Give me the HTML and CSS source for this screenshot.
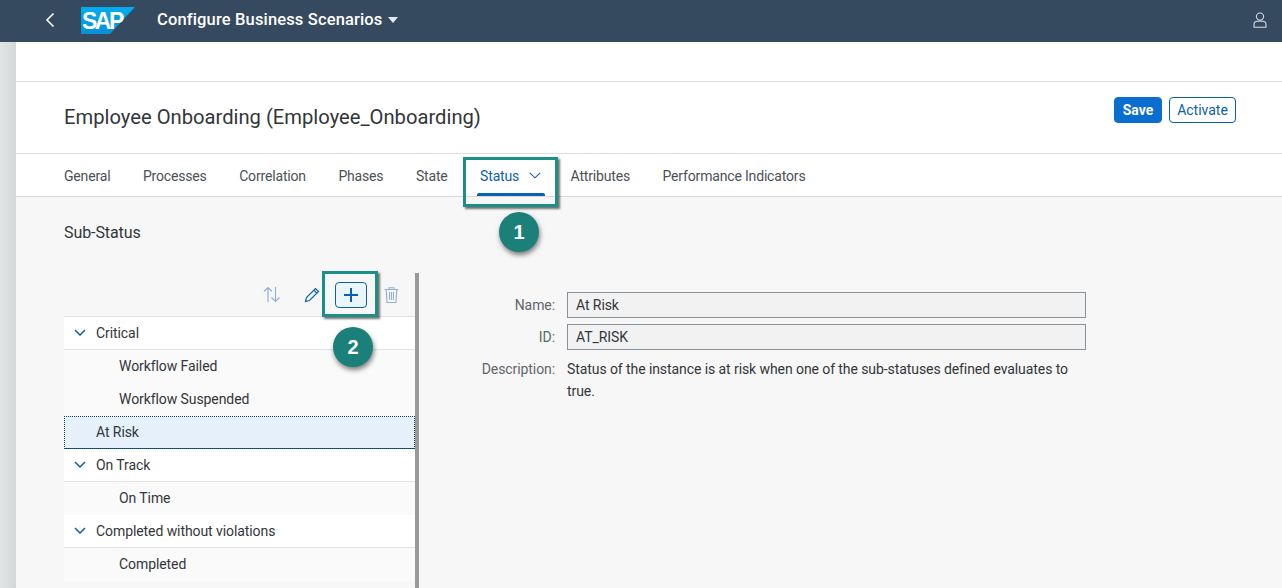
FILE: index.html
```html
<!DOCTYPE html>
<html>
<head>
    <title>Configure Business Scenarios</title>
    <link rel="stylesheet" href="styles.css">
</head>
<body>
    <header class="shell">
        <svg class="back" width="12" height="16" viewBox="0 0 12 16"><path d="M9.500 1.500 3 8l6.500 6.500" fill="none" stroke="#fff" stroke-width="1.600"/></svg>
        <div class="logo">
            <svg width="54" height="27" viewBox="0 0 54 27"><defs><linearGradient id="sapg" x1="0" y1="0" x2="0" y2="1"><stop offset="0" stop-color="#00aeef"/><stop offset="1" stop-color="#0a8fd6"/></linearGradient></defs><polygon points="0,0 54,0 29,27 0,27" fill="url(#sapg)"/></svg>
            <span class="logo-text">SAP</span>
        </div>
        <span class="app-title">Configure Business Scenarios</span>
        <span class="caret"></span>
        <svg class="user" width="14" height="16" viewBox="0 0 14 16"><circle cx="7" cy="4.600" r="3.600" fill="none" stroke="#d5dde6" stroke-width="1.100"/><path d="M1 15.200V12.600C1 10.500 2.600 9.200 4.400 9.200h5.200c1.800 0 3.400 1.300 3.400 3.400v2.600z" fill="none" stroke="#d5dde6" stroke-width="1.100"/></svg>
    </header>

    <div class="page">
        <div class="strip"></div>
        <main class="content">
            <div class="topbar"></div>
            <div class="title-row">
                <h1>Employee Onboarding (Employee_Onboarding)</h1>
                <div class="actions">
                    <button class="btn btn-save">Save</button>
                    <button class="btn btn-activate">Activate</button>
                </div>
            </div>
            <nav class="tabs">
                <a class="tab">General</a>
                <a class="tab">Processes</a>
                <a class="tab">Correlation</a>
                <a class="tab">Phases</a>
                <a class="tab">State</a>
                <a class="tab tab-active">Status
                    <svg class="tab-arrow" width="12" height="7" viewBox="0 0 12 7"><path d="M.8.800 6 5.800 11.200.800" fill="none" stroke="#0a5fb0" stroke-width="1.100"/></svg>
                    <span class="callout-box callout-tab"></span>
                    <span class="badge badge-tab">1</span>
                </a>
                <a class="tab">Attributes</a>
                <a class="tab">Performance Indicators</a>
            </nav>
            <section class="body">
                <h2>Sub-Status</h2>
                <div class="split">
                    <div class="tree">
                        <div class="toolbar">
                            <svg class="tool-sort" width="18" height="17" viewBox="0 0 18 17"><path d="M5 16V1.500M1 5.500l4-4 4 4M12.500 1v14.500M8.500 11.500l4 4 4-4" fill="none" stroke="#8fb2d8" stroke-width="1.200"/></svg>
                            <svg class="tool-edit" width="16" height="16" viewBox="0 0 16 16"><path d="M1.500 14.500 2.500 10.500 11.500 1.500 14.500 4.500 5.500 13.500zM9.800 3.200l3 3" fill="none" stroke="#0a5fb0" stroke-width="1.200"/></svg>
                            <span class="tool-add">
                                <svg width="16" height="16" viewBox="0 0 16 16"><path d="M8 1v14M1 8h14" stroke="#0a5fb0" stroke-width="2"/></svg>
                                <span class="callout-box callout-add"></span>
                                <span class="badge badge-add">2</span>
                            </span>
                            <svg class="tool-trash" width="15" height="16" viewBox="0 0 15 16"><path d="M.5 2.500h14M5 2.500V.7h5v1.800M2.200 2.500l.8 13h9l.8-13M5.500 5v8M7.500 5v8M9.500 5v8" fill="none" stroke="#8fb2d8" stroke-width="1.100"/></svg>
                        </div>
                        <div class="row row-parent"><svg class="chev" width="12" height="7" viewBox="0 0 12 7"><path d="M1 1l5 5 5-5" fill="none" stroke="#0a5fb0" stroke-width="1.500"/></svg>Critical</div>
                        <div class="row row-child">Workflow Failed</div>
                        <div class="row row-child">Workflow Suspended</div>
                        <div class="row row-selected">At Risk</div>
                        <div class="row row-parent"><svg class="chev" width="12" height="7" viewBox="0 0 12 7"><path d="M1 1l5 5 5-5" fill="none" stroke="#0a5fb0" stroke-width="1.500"/></svg>On Track</div>
                        <div class="row row-child">On Time</div>
                        <div class="row row-parent"><svg class="chev" width="12" height="7" viewBox="0 0 12 7"><path d="M1 1l5 5 5-5" fill="none" stroke="#0a5fb0" stroke-width="1.500"/></svg>Completed without violations</div>
                        <div class="row row-child">Completed</div>
                    </div>
                    <div class="splitter"></div>
                    <div class="details">
                        <label class="lbl">Name:</label>
                        <div class="field">At Risk</div>
                        <label class="lbl">ID:</label>
                        <div class="field">AT_RISK</div>
                        <label class="lbl lbl-desc">Description:</label>
                        <p class="desc">Status of the instance is at risk when one of the sub-statuses defined evaluates to true.</p>
                    </div>
                </div>
            </section>
        </main>
    </div>
</body>
</html>
```

FILE: styles.css
```css
html, body {
    margin: 0;
    height: 588px;
    overflow: hidden;
}
body {
    font-family: Roboto, Arial, sans-serif;
    font-size: 14px;
    letter-spacing: -0.08px;
    color: #32363a;
    background: #fff;
}
.shell {
    height: 42px;
    background: #354a5f;
    display: flex;
    align-items: center;
    box-sizing: border-box;
    padding: 0 0 3px 44px;
}
.back {
    margin-right: 25px;
}
.logo {
    position: relative;
    width: 54px;
    height: 27px;
    margin-right: 22px;
    align-self: flex-start;
    margin-top: 7px;
}
.logo svg {
    display: block;
}
.logo-text {
    position: absolute;
    left: 1px;
    top: 2px;
    font-family: "Liberation Sans", Arial, sans-serif;
    font-size: 23px;
    line-height: 24px;
    font-weight: bold;
    letter-spacing: -2.500px;
    color: #fff;
}
.app-title {
    color: #fff;
    font-size: 16.500px;
    letter-spacing: 0.150px;
    font-weight: 500;
}
.caret {
    width: 0;
    height: 0;
    margin-left: 5px;
    border-left: 5px solid transparent;
    border-right: 5px solid transparent;
    border-top: 6px solid #e4eaf0;
}
.user {
    margin-left: auto;
    margin-right: 15px;
}
.page {
    display: flex;
    height: 546px;
}
.strip {
    width: 16px;
    background: linear-gradient(to right, #e3e5e5, #d4d7d8);
}
.content {
    flex: 1;
    display: flex;
    flex-direction: column;
    min-width: 0;
}
.topbar {
    height: 39px;
    border-bottom: 1px solid #dfdfdf;
}
.title-row {
    height: 71px;
    border-bottom: 1px solid #dfdfdf;
    display: flex;
    justify-content: space-between;
    padding: 0 46px 0 48px;
}
h1 {
    margin: 22px 0 0;
    font-size: 20.200px;
    line-height: 26px;
    font-weight: 400;
    letter-spacing: 0;
}
.actions {
    display: flex;
    gap: 7px;
    margin-top: 15px;
}
.btn {
    font-family: inherit;
    font-size: 14px;
    height: 26px;
    border-radius: 4px;
    padding: 0;
    box-sizing: border-box;
}
.btn-save {
    width: 48px;
    background: #0a6ed1;
    border: 1px solid #0a6ed1;
    color: #fff;
    font-weight: 700;
}
.btn-activate {
    width: 67px;
    background: #fff;
    border: 1px solid #0a5fb0;
    color: #0a5fb0;
}
.tabs {
    height: 42px;
    border-bottom: 1px solid #d9d9d9;
    display: flex;
    padding-left: 48px;
    gap: 32.500px;
    letter-spacing: -0.170px;
}
.tab {
    position: relative;
    line-height: 44px;
    color: #4a5157;
    white-space: nowrap;
}
.tab-active {
    color: #0a5fb0;
    padding-right: 19px;
}
.tab-active::after {
    content: "";
    position: absolute;
    left: -3px;
    right: -7px;
    bottom: 0;
    height: 3px;
    border-radius: 2px 2px 0 0;
    background: #0a5fb0;
}
.tab-arrow {
    position: absolute;
    left: 49px;
    top: 18px;
}
.callout-box {
    position: absolute;
    box-sizing: border-box;
    border: 3px solid #1c8f88;
    box-shadow: 2px 2px 2px rgba(0, 0, 0, 0.55);
    pointer-events: none;
}
.callout-tab {
    left: -17px;
    top: 3px;
    width: 95px;
    height: 50px;
}
.callout-add {
    left: -14px;
    top: -12px;
    width: 56px;
    height: 46px;
}
.badge {
    position: absolute;
    width: 40px;
    height: 40px;
    border-radius: 50%;
    background: #1b8079;
    color: #fff;
    font-family: "Liberation Sans", Arial, sans-serif;
    font-weight: 700;
    font-size: 20px;
    line-height: 40px;
    text-align: center;
    box-shadow: 1px 3px 5px rgba(0, 0, 0, 0.5);
}
.badge-tab {
    left: 19px;
    top: 58px;
}
.badge-add {
    left: -3px;
    top: 44px;
}
.body {
    flex: 1;
    background: #f7f7f7;
    padding: 0 0 0 48px;
    min-height: 0;
}
h2 {
    margin: 0;
    padding-top: 25px;
    font-size: 16px;
    line-height: 22px;
    font-weight: 400;
}
.split {
    display: flex;
    margin-top: 29px;
    height: 315px;
}
.tree {
    width: 351px;
}
.toolbar {
    height: 43px;
    border-bottom: 1px solid #e2e2e2;
    display: flex;
    align-items: center;
    position: relative;
    padding-left: 199px;
}
.tool-sort {
    margin-right: 23px;
}
.tool-edit {
    margin-right: 15px;
}
.tool-add {
    position: relative;
    width: 32px;
    height: 26px;
    border: 1px solid #0a5fb0;
    border-radius: 4px;
    background: #ebf5fe;
    box-sizing: border-box;
    display: flex;
    align-items: center;
    justify-content: center;
    margin-right: 17px;
}
.row {
    height: 33px;
    box-sizing: border-box;
    line-height: 32px;
    white-space: nowrap;
}
.row-parent {
    background: #fff;
    border-bottom: 1px solid #e4e4e4;
    padding-left: 10px;
}
.chev {
    margin-right: 10px;
    vertical-align: 2px;
}
.row-child {
    padding-left: 55px;
    background: #fafafa;
}
.row-selected {
    padding-left: 32px;
    background: #e5f0fa;
    outline: 1px dotted #1a3d5c;
    outline-offset: -1px;
    border-bottom: 1px solid #0a5fb0;
}
.splitter {
    width: 4px;
    background: #9a9a9a;
}
.details {
    width: 620px;
    padding-top: 19px;
    display: grid;
    grid-template-columns: 136px 519px;
    column-gap: 12px;
    row-gap: 6px;
    grid-auto-rows: min-content;
}
.lbl {
    text-align: right;
    color: #5f666c;
    line-height: 26px;
}
.lbl-desc {
    line-height: 22px;
    margin-top: 2px;
}
.field {
    height: 26px;
    box-sizing: border-box;
    border: 1px solid #89919a;
    background: #f2f2f2;
    padding-left: 8px;
    line-height: 24px;
}
.desc {
    margin: 2px 0 0;
    line-height: 22px;
}
```
